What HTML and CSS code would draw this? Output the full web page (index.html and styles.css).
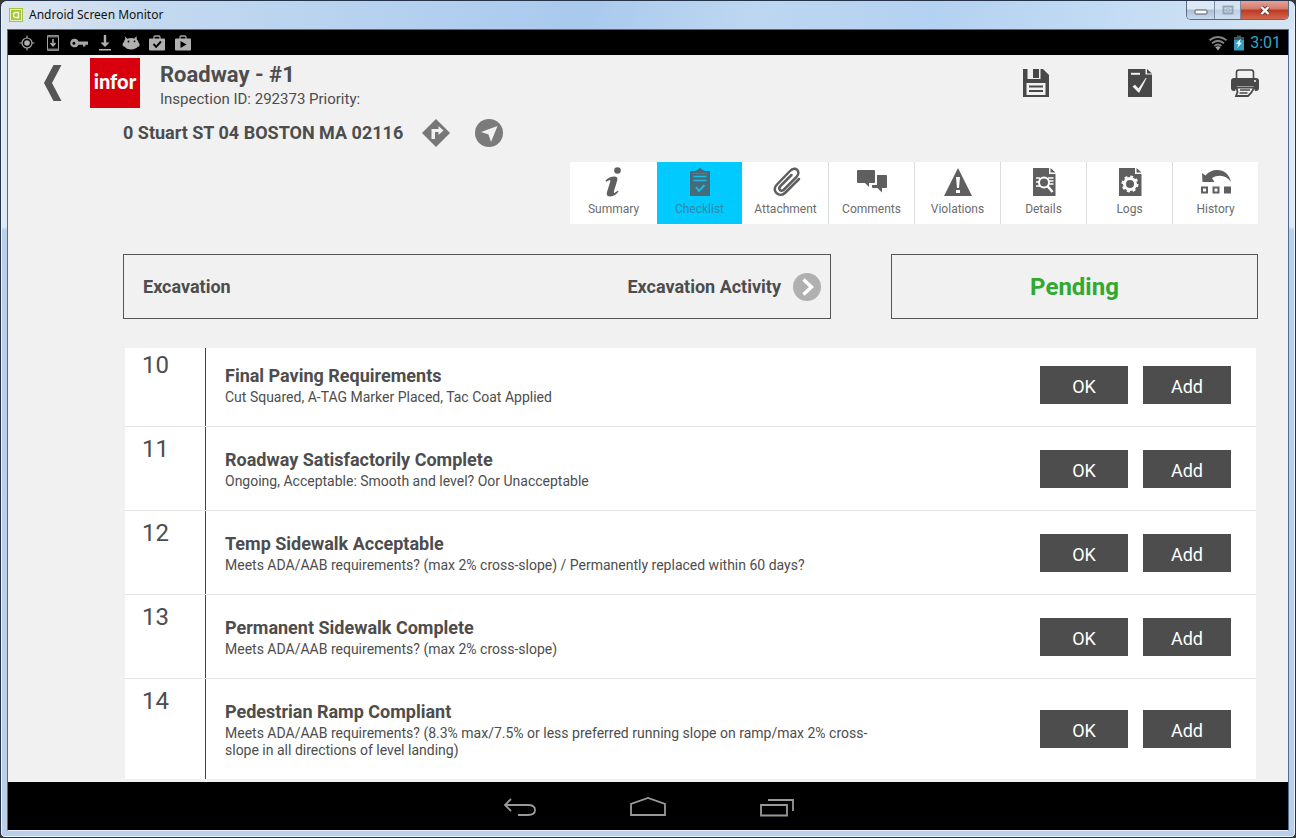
FILE: index.html
```html
<!DOCTYPE html>
<html lang="en">
<head>
<meta charset="utf-8">
<title>Android Screen Monitor</title>
<link rel="stylesheet" href="styles.css">
</head>
<body>
<div class="window">
  <header class="titlebar">
    <svg class="app-icon" viewBox="0 0 14 14" width="14" height="14" aria-hidden="true"><rect width="14" height="14" fill="#a4c639"/><rect x="1.5" y="1.5" width="11" height="11" fill="none" stroke="#e6f2b8"/><path d="M9.500 4.500h-3q-2 0-2 2.500t2 2.500h3zM9.500 4v6.500" fill="none" stroke="#f4fadb" stroke-width="1.300"/></svg>
    <span class="window-title">Android Screen Monitor</span>
    <div class="window-controls">
      <button class="control minimize" aria-label="Minimize"><svg viewBox="0 0 14 6" width="14" height="6"><rect x="1" y="1" width="12" height="4" rx="1" fill="#fff" stroke="#545b68"/></svg></button>
      <button class="control maximize" aria-label="Maximize"><svg viewBox="0 0 12 10" width="12" height="10"><path d="M1.5 1.5h9v7h-9z" fill="none" stroke="#96a4b5" stroke-width="2"/><path d="M4 4h4v2H4z" fill="#dce6f1" stroke="#96a4b5"/></svg></button>
      <button class="control close" aria-label="Close"><svg viewBox="0 0 12 11" width="12" height="11"><path d="M2.5 2l7 7M9.5 2l-7 7" stroke="#6b3434" stroke-width="4"/><path d="M2.5 2l7 7M9.5 2l-7 7" stroke="#fff" stroke-width="2.4"/></svg></button>
    </div>
  </header>
  <div class="device">
    <div class="statusbar">
      <svg viewBox="0 0 16 16" width="16" height="16"><circle cx="8" cy="8" r="5" fill="none" stroke="#a5a5a5" stroke-width="1.2"/><circle cx="8" cy="8" r="2.8" fill="#b0b0b0"/><path d="M8 .5v3M8 12.500v3M.5 8h3M12.500 8h3" stroke="#a5a5a5" stroke-width="1.2"/></svg>
      <svg viewBox="0 0 16 16" width="16" height="16"><path d="M2.500.5h11v15h-11z" fill="none" stroke="#a5a5a5"/><path d="M2.500 1.500h11M2.500 14.500h11" stroke="#777" stroke-width="2"/><path d="M8 4v6M5.500 8L8 10.800 10.500 8" fill="none" stroke="#b0b0b0" stroke-width="1.500"/></svg>
      <svg class="wide" viewBox="0 1 18 14" width="18" height="14"><path d="M4.500 3.700a4.300 4.300 0 1 0 4 6H13v1.800h2.300V9.700H18V6.600H8.600a4.300 4.300 0 0 0-4.100-2.900zm-.6 3a1.500 1.500 0 1 1 0 3 1.500 1.500 0 0 1 0-3z" fill="#a8a8a8" fill-rule="evenodd"/></svg>
      <svg viewBox="0 0 16 16" width="16" height="16"><path d="M6.800 0h2.400v7.500H12.500L8 12 3.500 7.500h3.300zM2 14h12v1.500H2z" fill="#b0b0b0"/></svg>
      <svg class="wide" viewBox="0 0 18 16" width="18" height="16"><path d="M3 1.500l2.400 2.200Q9 2.400 12.500 3.400L14.500 1l.3 3.500Q16.500 6 16.500 7.500l1 1.200q.4 3.300-1.500 2.900-2 2.800-7 2.800-4.500 0-6.200-2.700-2.500 0-2.200-3.300L2 7q.3-2 1.300-3z" fill="#b0b0b0"/><circle cx="6.500" cy="6.500" r=".9"/><circle cx="12.500" cy="6.300" r=".9"/></svg>
      <svg viewBox="0 0 16 16" width="16" height="16"><path d="M5 4V2.200Q5 1 6.200 1h3.600Q11 1 11 2.200V4" fill="none" stroke="#a5a5a5" stroke-width="1.300"/><rect y="3.500" width="16" height="12" rx="1" fill="#b0b0b0"/><path d="M4.500 9l2.600 2.800L12 6.500" fill="none" stroke="#000" stroke-width="1.900"/></svg>
      <svg viewBox="0 0 16 16" width="16" height="16"><path d="M5 4V2.200Q5 1 6.200 1h3.600Q11 1 11 2.200V4" fill="none" stroke="#a5a5a5" stroke-width="1.300"/><rect y="3.500" width="16" height="12" rx="1" fill="#b0b0b0"/><path d="M5.500 6v7l6-3.500z"/></svg>
      <div class="status-end">
        <svg viewBox="0 0 20 16" width="20" height="16"><g fill="none" stroke="#848484" stroke-width="2"><path d="M1.500 5.200Q10-1 18.500 5.200"/><path d="M4 8.200Q10 3.500 16 8.200"/><path d="M6.500 11Q10 8 13.500 11"/></g><path d="M7.500 12.200Q10 10.500 12.500 12.200L10 15.500z" fill="#a5a5a5"/></svg>
        <svg viewBox="0 0 10 16" width="10" height="16"><path d="M3 .5h4V2h3v4H0V2h3z" fill="#40575f"/><path d="M0 5h10v10.500H0z" fill="#319fc0"/><path d="M6.800 3.500L2 9h2.400l-1.200 4L8 7.700H5.600z" fill="#fff"/></svg>
        <time class="clock">3:01</time>
      </div>
    </div>

    <main class="app">
      <header class="app-header">
        <button class="icon-button back" aria-label="Back"><svg viewBox="0 0 19 36" width="19" height="36"><path d="M10.500 0H18.500L9 18l9.500 18H10.500L1 18z" fill="#555"/></svg></button>
        <div class="logo">infor</div>
        <div class="heading">
          <h1 class="title">Roadway - #1</h1>
          <p class="subtitle">Inspection ID: 292373 Priority:</p>
        </div>
        <div class="actions">
          <button class="icon-button" aria-label="Save"><svg viewBox="0 0 28 30" width="28" height="30"><path d="M1 1h20l6 6v22H1z" fill="#484848"/><path d="M5.500 1h13v10h-13z" fill="#f1f1f1"/><path d="M11 1h6v9h-6z" fill="#484848"/><path d="M4.500 15h19v12h-19z" fill="#f1f1f1"/><path d="M7 18.500h14M7 23h14" stroke="#484848" stroke-width="1.800"/></svg></button>
          <button class="icon-button" aria-label="Complete inspection"><svg viewBox="0 0 26 30" width="26" height="30"><path d="M1 1h17.500v5.500H25V29H1z" fill="#484848"/><path d="M20 1l5 4.500h-5z" fill="#484848"/><path d="M4 4.800h9v2H4z" fill="#f1f1f1"/><path d="M5.500 18.500l2.500-1.800 3.500 3.800L18.700 10h1L12 25z" fill="#f1f1f1"/></svg></button>
          <button class="icon-button" aria-label="Print"><svg viewBox="0 0 30 30" width="30" height="30"><path d="M6.500 11V4.500Q6.500 2 9 2h12q2.500 0 2.500 2.500V11" fill="none" stroke="#484848" stroke-width="1.600"/><path d="M4 10h22q3 0 3 3v7q0 3-3 3h-1l-1.500-5H7l-2 5H4q-3 0-3-3v-7q0-3 3-3z" fill="#484848"/><circle cx="25" cy="13" r="1.100" fill="#f1f1f1"/><path d="M6.500 19.500h18l-3.500 5.500-3 3H6l1.500-4z" fill="#f1f1f1" stroke="#484848" stroke-width="1.800"/><path d="M10 22h10M9.500 25h8" stroke="#484848" stroke-width="1.500"/></svg></button>
        </div>
      </header>

      <div class="body">
        <div class="address">
          <span>0 Stuart ST 04 BOSTON MA 02116</span>
          <div class="address-actions">
            <button class="icon-button" aria-label="Directions"><svg viewBox="0 0 28 28" width="28" height="28"><path d="M14 0l14 14-14 14L0 14z" fill="#777"/><path d="M9.500 20V10h7V7l5 4.500-5 4.500v-3H13v7z" fill="#f1f1f1"/></svg></button>
            <button class="icon-button" aria-label="Locate"><svg viewBox="0 0 28 28" width="28" height="28"><circle cx="14" cy="14" r="14" fill="#7b7b7b"/><path d="M22.500 7L16 23l-2.500-7.500L6 13z" fill="#f1f1f1"/></svg></button>
          </div>
        </div>

        <nav class="tabs">
          <button class="tab"><svg viewBox="0 0 30 30" width="30" height="30"><circle cx="18.500" cy="3.500" r="3.300"/><path d="M6.500 13.500q4-4 8.500-4 4.500 0 3.200 4L15 24q-.7 2.600 1.200 1.600l2.600-1.900.8.900q-4 4.900-8 4.900-5 0-3.600-4.500l3.300-10.400q.6-2-1-1.400l-3.200 1.600z"/></svg>Summary</button>
          <button class="tab active"><svg viewBox="0 0 30 30" width="30" height="30"><path d="M5 4h5l3-1.500q2-3 4 0L20 4h5v25H5z"/><path d="M8.500 9.500h13M8.500 13.500h13" stroke="#20b8e4" stroke-width="1.500"/><path d="M8 6.500h14" stroke="#3b8ba4"/><path d="M11 20l3 4 5.500-6" fill="none" stroke="#20b8e4" stroke-width="2"/></svg>Checklist</button>
          <button class="tab"><svg viewBox="0 0 30 30" width="30" height="30"><g fill="none" stroke="#5f5f5f" stroke-width="2.500" stroke-linecap="round"><path d="M28 12L14.500 25.500c-6 6-14.500-1.500-9-7.500L19 4c5.500-5.500 11.500.5 6.500 6L13 22.500c-3 3-6.500-.5-3.500-3.500L20.500 8"/></g></svg>Attachment</button>
          <button class="tab"><svg viewBox="0 0 32 30" width="32" height="30"><path d="M1 4q0-1 1-1h16q1 0 1 1v11q0 1-1 1h-5v4l-4-4H2q-1 0-1-1z"/><path d="M21 8h9q1 0 1 1v11q0 1-1 1h-4v4.500L21.500 21H17q-1 0-1-1v-2h5z"/></svg>Comments</button>
          <button class="tab"><svg viewBox="0 0 30 30" width="30" height="30"><path d="M15 1l14 28H1z"/><path d="M13 10h4l-1 11h-2zM13 23h4v3h-4z" fill="#fff"/></svg>Violations</button>
          <button class="tab"><svg viewBox="0 0 30 30" width="30" height="30"><path d="M4 1h16v6h6.500v22H4z"/><path d="M21.500 1l5 4.500h-5z"/><path d="M7 11h4M7 15h3M7 19h4M19 11h5.500M20 14h4.500M20 17h4.500" stroke="#fff" stroke-width="1.500"/><circle cx="15" cy="15.500" r="5" fill="#5f5f5f" stroke="#fff" stroke-width="2"/><path d="M18.500 19l5 6" stroke="#fff" stroke-width="2.500"/></svg>Details</button>
          <button class="tab"><svg viewBox="0 0 30 30" width="30" height="30"><path d="M4 1h16v6h6.500v22H4z"/><path d="M21.500 1l5 4.500h-5z"/><circle cx="15" cy="17" r="7.500" fill="none" stroke="#fff" stroke-width="2" stroke-dasharray="3 2.890"/><circle cx="15" cy="17" r="5.500" fill="none" stroke="#fff" stroke-width="3"/></svg>Logs</button>
          <button class="tab"><svg viewBox="0 0 32 30" width="32" height="30"><path d="M2 6l3.500 2.500Q10 3 17 3q11 0 14 12-6-8.500-16-5.500l-3 1.500 2.500 4H2.500z"/><path d="M2 20.500h5v5H2zM13.500 20.500h5v5h-5z" fill="none" stroke="#5f5f5f" stroke-width="2"/><path d="M24 19.500h7v7h-7z"/></svg>History</button>
        </nav>

        <div class="summary">
          <button class="activity">
            <span>Excavation</span>
            <span class="activity-name">Excavation Activity
              <svg viewBox="0 0 28 28" width="28" height="28"><circle cx="14" cy="14" r="14" fill="#b0b0b0"/><path d="M10.500 6.500L18.500 14l-8 7.500" fill="none" stroke="#fff" stroke-width="3.500"/></svg>
            </span>
          </button>
          <div class="state">Pending</div>
        </div>

        <ol class="checklist">
          <li class="item">
            <div class="number">10</div>
            <div class="details"><h2 class="name">Final Paving Requirements</h2><p class="note">Cut Squared, A-TAG Marker Placed, Tac Coat Applied</p></div>
            <div class="item-actions"><button class="action">OK</button><button class="action">Add</button></div>
          </li>
          <li class="item">
            <div class="number">11</div>
            <div class="details"><h2 class="name">Roadway Satisfactorily Complete</h2><p class="note">Ongoing, Acceptable: Smooth and level? Oor Unacceptable</p></div>
            <div class="item-actions"><button class="action">OK</button><button class="action">Add</button></div>
          </li>
          <li class="item">
            <div class="number">12</div>
            <div class="details"><h2 class="name">Temp Sidewalk Acceptable</h2><p class="note">Meets ADA/AAB requirements? (max 2% cross-slope) / Permanently replaced within 60 days?</p></div>
            <div class="item-actions"><button class="action">OK</button><button class="action">Add</button></div>
          </li>
          <li class="item">
            <div class="number">13</div>
            <div class="details"><h2 class="name">Permanent Sidewalk Complete</h2><p class="note">Meets ADA/AAB requirements? (max 2% cross-slope)</p></div>
            <div class="item-actions"><button class="action">OK</button><button class="action">Add</button></div>
          </li>
          <li class="item">
            <div class="number">14</div>
            <div class="details"><h2 class="name">Pedestrian Ramp Compliant</h2><p class="note">Meets ADA/AAB requirements? (8.3% max/7.5% or less preferred running slope on ramp/max 2% cross-slope in all directions of level landing)</p></div>
            <div class="item-actions"><button class="action">OK</button><button class="action">Add</button></div>
          </li>
        </ol>
      </div>
    </main>

    <nav class="navbar">
      <button class="icon-button" aria-label="Back"><svg viewBox="0 0 36 24" width="36" height="24"><path d="M9 3L3 9l6 6M3 9h23q7 0 7 5t-7 5H16" fill="none" stroke="#999" stroke-width="1.800"/></svg></button>
      <button class="icon-button" aria-label="Home"><svg viewBox="0 0 36 24" width="36" height="24"><path d="M1 19V8l17-6 17 6v11z" fill="none" stroke="#999" stroke-width="1.800"/></svg></button>
      <button class="icon-button" aria-label="Recent apps"><svg viewBox="0 0 36 24" width="36" height="24"><path d="M3 9h26v10.500H3zM10 4h25v11" fill="none" stroke="#999" stroke-width="1.800"/></svg></button>
    </nav>
  </div>
</div>
</body>
</html>
```
FILE: styles.css
```css
* { box-sizing: border-box; }

body {
  margin: 0;
  background: #3b3834;
  color: #4d4d4d;
  font-family: Roboto, "Liberation Sans", sans-serif;
}

h1, h2, p, ol { margin: 0; padding: 0; }

button {
  margin: 0;
  padding: 0;
  border: 0;
  background: none;
  color: inherit;
  font: inherit;
}

svg { display: block; flex: none; }

/* Desktop window frame */
.window {
  display: flex;
  flex-direction: column;
  min-height: 100vh;
  padding: 0 6px 6px;
  border: 1px solid #26344a;
  border-radius: 7px 7px 5px 5px;
  background: linear-gradient(#dde9f5 0, #dde9f5 226px, #b9d0ea 229px, #bccfe8 100%);
  box-shadow: inset 0 0 0 1px #e9f3fc;
}

.titlebar {
  display: flex;
  align-items: center;
  height: 28px;
  margin: 0 -5px;
  padding: 0 5px 0 7px;
  background: linear-gradient(100deg, #dfe7f0 0, #c3d9ef 12%, #b5d1f0 30%, #a9c9ed 45%, #bdd7f2 58%, #b3d1f1 72%, #c2dbf4 85%, #d5e4f2 100%);
  border-radius: 6px 6px 0 0;
}

.app-icon { margin-right: 6px; }

.window-title {
  color: #111;
  font: 12px/16px "Noto Sans", "Open Sans", sans-serif;
}

.window-controls {
  display: flex;
  align-self: flex-start;
  margin-left: auto;
  border: 1px solid #5c6b80;
  border-top: 0;
  border-radius: 0 0 5px 5px;
  overflow: hidden;
}

.control {
  display: grid;
  place-items: center;
  width: 28px;
  height: 18px;
  border-right: 1px solid #7c8ca0;
  background: linear-gradient(#dce8f5 45%, #aabdd2 50%, #c9dcef);
}

.minimize { padding-top: 4px; }
.maximize { width: 26px; background: linear-gradient(#d5e3f2 45%, #bfd1e5 50%, #cfdff0); }
.close { width: 47px; border: 0; background: linear-gradient(#e3a399 0, #d47a69 45%, #b93a22 50%, #d4664c); }

.device {
  display: flex;
  flex: 1;
  flex-direction: column;
  border: 1px solid #4e6b93;
  border-bottom-color: #e2effa;
  background: #000;
}

/* Android system bars */
.statusbar {
  display: flex;
  align-items: center;
  gap: 10px;
  height: 25px;
  padding: 0 7px 0 11px;
}

.statusbar .wide { margin: 0 -1px; }

.status-end {
  display: flex;
  align-items: center;
  gap: 6px;
  margin-left: auto;
}

.clock {
  color: #33a5cc;
  font-size: 16px;
  line-height: 20px;
}

.navbar {
  display: flex;
  align-items: center;
  justify-content: center;
  gap: 92px;
  height: 48px;
  padding-top: 3px;
}

/* Inspection screen */
.app {
  flex: 1;
  padding: 3px 30px 2px;
  background: #f1f1f1;
}

.app-header {
  display: flex;
  height: 50px;
}

.icon-button { display: block; }
.back { padding: 0 28px 0 5px; }

.logo {
  width: 50px;
  height: 50px;
  margin-right: 20px;
  background: #d9000d;
  color: #fff;
  font: 900 20px/46px Lato, sans-serif;
  text-align: center;
}

.heading { flex: 1; padding-top: 4px; }
.title { font-size: 22px; line-height: 26px; font-weight: 700; }
.subtitle { font-size: 15px; line-height: 22px; }

.actions {
  display: flex;
  align-items: center;
  gap: 77px;
  margin-right: -2px;
}

.body { padding-left: 85px; }

.address {
  display: flex;
  align-items: center;
  gap: 19px;
  margin-top: 11px;
  font-size: 18px;
  line-height: 28px;
  font-weight: 700;
}

.address-actions { display: flex; gap: 25px; }

.tabs {
  display: flex;
  justify-content: flex-end;
  margin-top: 15px;
}

.tab {
  display: flex;
  flex-direction: column;
  align-items: center;
  gap: 4px;
  width: 86px;
  height: 62px;
  padding-top: 5px;
  border-left: 1px solid #dcdcdc;
  background: #fff;
  color: #6c6c6c;
  fill: #5f5f5f;
  font-size: 12px;
  line-height: 16px;
}

.tab:first-child, .tab.active, .tab.active + .tab { border-left-color: #fff; }
.tab.active { background: #00caff; color: #2f8aa5; fill: #456c78; }

.summary {
  display: grid;
  grid-template-columns: 708fr 367fr;
  gap: 60px;
  margin-top: 30px;
  font-weight: 700;
}

.activity, .state {
  height: 65px;
  border: 1px solid #555;
}

.activity {
  display: flex;
  align-items: center;
  justify-content: space-between;
  padding: 0 9px 0 19px;
  font-size: 18px;
}

.activity-name { display: flex; align-items: center; gap: 12px; }

.state {
  color: #30a930;
  font-size: 24px;
  line-height: 65px;
  text-align: center;
}

.checklist {
  margin: 29px 2px 0;
  overflow: hidden;
  background: #fff;
  list-style: none;
}

.item {
  display: flex;
  border-bottom: 1px solid #e5e5e5;
}

.item:first-child { margin-top: -5px; }
.item:last-child { border-bottom: 0; }

.number {
  flex: none;
  width: 81px;
  padding: 7px 0 0 17px;
  border-right: 1px solid #444;
  font-size: 24px;
  line-height: 30px;
}

.details {
  flex: 1;
  padding: 22px 0 20px 19px;
}

.name { font-size: 18px; line-height: 22px; font-weight: 700; }
.note { max-width: 660px; margin-top: 2px; font-size: 14px; line-height: 17px; }

.item-actions {
  display: flex;
  align-items: center;
  gap: 15px;
  padding: 0 25px;
}

.action {
  width: 88px;
  height: 38px;
  padding-top: 3px;
  background: #4d4d4d;
  color: #fff;
  font-size: 18px;
}
```
